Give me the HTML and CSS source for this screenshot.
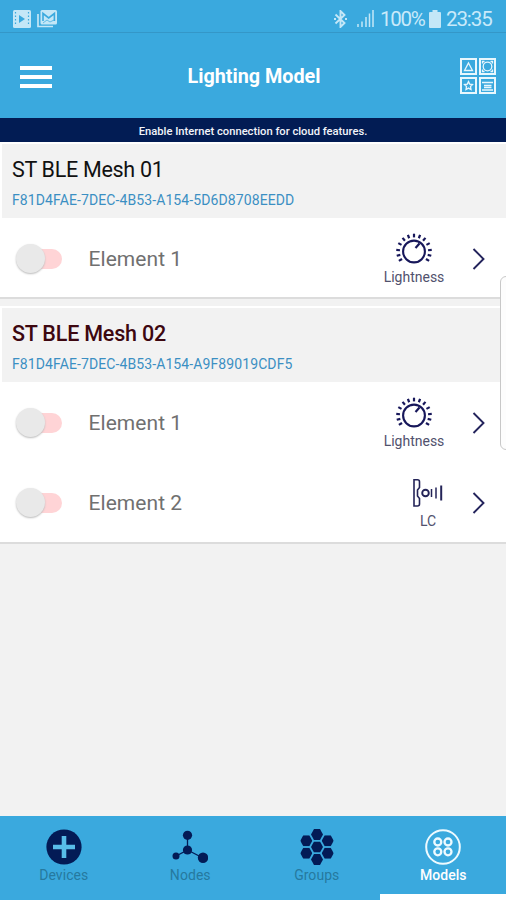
FILE: index.html
```html
<!DOCTYPE html>
<html lang="en">
<head>
<meta charset="utf-8">
<title>Lighting Model</title>
<link rel="stylesheet" href="styles.css">
</head>
<body>
<svg class="defs" width="0" height="0">
  <symbol id="dial" viewBox="0 0 36 32">
    <circle cx="18" cy="18.500" r="10.900" fill="none" stroke="#17175a" stroke-width="2.100"/>
    <path d="M19.500 15l4-4.500" stroke="#17175a" stroke-width="2.200" fill="none"/>
    <g stroke="#17175a" stroke-width="2.200">
      <path id="tick" d="M18 4.400V.7"/>
      <use href="#tick" transform="rotate(20 18 18.500)"/>
      <use href="#tick" transform="rotate(40 18 18.500)"/>
      <use href="#tick" transform="rotate(62 18 18.500)"/>
      <use href="#tick" transform="rotate(85 18 18.500)"/>
      <use href="#tick" transform="rotate(104 18 18.500)"/>
      <use href="#tick" transform="rotate(122 18 18.500)"/>
      <use href="#tick" transform="rotate(-20 18 18.500)"/>
      <use href="#tick" transform="rotate(-40 18 18.500)"/>
      <use href="#tick" transform="rotate(-62 18 18.500)"/>
      <use href="#tick" transform="rotate(-85 18 18.500)"/>
      <use href="#tick" transform="rotate(-104 18 18.500)"/>
      <use href="#tick" transform="rotate(-122 18 18.500)"/>
    </g>
  </symbol>
  <symbol id="chevron" viewBox="0 0 14 22"><path d="M1.500 1l10 10-10 10" fill="none" stroke="#24245c" stroke-width="1.900"/></symbol>
  <symbol id="hex" viewBox="0 0 12 11"><path d="M3 0h6l3 5.500L9 11H3L0 5.500z" fill="#031b56"/></symbol>
</svg>
<div class="app">
  <div class="status">
    <svg width="18" height="18" viewBox="0 0 18 18"><rect width="18" height="18" rx="1.500" fill="#c4e7f7"/><path d="M2.500 2v14M15.500 2v14" stroke="#3aa9de" stroke-width="1.200" stroke-dasharray="1.500 2"/><path d="M6 5l6 4-6 4z" fill="#3aa9de"/></svg>
    <svg class="gallery" width="20" height="18" viewBox="0 0 20 18"><path d="M1 4v12.500h15" fill="none" stroke="#c4e7f7" stroke-width="1.700"/><rect x="3.500" width="16.500" height="14.500" rx="1.500" fill="#c4e7f7"/><path d="M6 11V3.500l5.700 4.500 5.700-4.500V11" fill="none" stroke="#3aa9de" stroke-width="1.600"/><path d="M6 13l4-3 3 2 4-2" fill="none" stroke="#3aa9de" stroke-width=".7"/></svg>
    <svg class="bt" width="13" height="18" viewBox="0 0 13 18"><path d="M1.500 4.500l9 8.500-4 4V1l4 4-9 8.500" fill="none" stroke="#c4e7f7" stroke-width="1.900"/><path d="M0 8h2v2H0zM11 8h2v2h-2z" fill="#c4e7f7"/></svg>
    <svg class="signal" width="17" height="17" viewBox="0 0 17 17"><path d="M1 17v-3M5 17v-5.500M9 17V7M12.500 17V3.500M16 17V0" stroke="#c4e7f7" stroke-width="1.500"/></svg>
    <span class="percent">100%</span>
    <svg class="battery" width="12" height="18" viewBox="0 0 12 18"><path d="M3.500 0h5v2H11q1 0 1 1v14q0 1-1 1H1q-1 0-1-1V3q0-1 1-1h2.500z" fill="#c4e7f7"/></svg>
    <span class="time">23:35</span>
  </div>
  <header class="toolbar">
    <div class="menu"><i></i><i></i><i></i></div>
    <h1>Lighting Model</h1>
    <svg class="models" width="36" height="36" viewBox="0 0 36 36" fill="none" stroke="#e8f7fd"><g stroke-width="2"><rect x="1" y="1" width="15" height="15"/><rect x="20" y="1" width="15" height="15"/><rect x="1" y="20" width="15" height="15"/><rect x="20" y="20" width="15" height="15"/></g><g stroke-width="1.300"><path d="M8.500 5l4 7.500h-8z"/><circle cx="27.500" cy="8.500" r="4.300"/><path d="M22.500 5.500v-2h2M30.500 3.500h2v2M22.500 11.500v2h2M30.500 13.500h2v-2"/><path d="M8.500 23.500l1.200 2.600 2.800.4-2 2 .5 3-2.500-1.400L6 31.500l.5-3-2-2 2.800-.4z"/><path d="M22 24.500h11M24 27.500h7.500M24 29.500h7.500M22 32h11"/></g></svg>
  </header>
  <div class="banner">Enable Internet connection for cloud features.</div>
  <main>
    <section class="card">
      <div class="node"><h2>ST BLE Mesh 01</h2><p class="uuid">F81D4FAE-7DEC-4B53-A154-5D6D8708EEDD</p></div>
      <div class="row"><span class="switch"></span><span class="name">Element 1</span><div class="kind"><svg width="36" height="32"><use href="#dial"/></svg><span>Lightness</span></div><svg class="go" width="14" height="22"><use href="#chevron"/></svg></div>
    </section>
    <section class="card">
      <div class="node"><h2 class="selected">ST BLE Mesh 02</h2><p class="uuid">F81D4FAE-7DEC-4B53-A154-A9F89019CDF5</p></div>
      <div class="row"><span class="switch"></span><span class="name">Element 1</span><div class="kind"><svg width="36" height="32"><use href="#dial"/></svg><span>Lightness</span></div><svg class="go" width="14" height="22"><use href="#chevron"/></svg></div>
      <div class="row"><span class="switch"></span><span class="name">Element 2</span><div class="kind lc"><svg width="30" height="32" viewBox="0 0 30 32" fill="none" stroke="#242458"><path d="M1 2.800h3.500q2 0 2 2v5.700l-2 2.500v6l2 2.500v5.500q0 2-2 2H1z" stroke-width="1.600"/><circle cx="12.500" cy="16" r="3.300" stroke-width="1.900"/><path d="M18.500 12v8" stroke-width="1.500"/><path d="M23 10.500v11" stroke-width="1.500"/><path d="M28.200 8.500v15" stroke-width="2"/></svg><span>LC</span></div><svg class="go" width="14" height="22"><use href="#chevron"/></svg></div>
    </section>
  </main>
  <nav>
    <div class="tab"><svg width="36" height="36" viewBox="0 0 36 36"><circle cx="18" cy="18" r="17.600" fill="#031b56"/><path d="M18 7v22M7 18h22" stroke="#58bde9" stroke-width="4.600"/></svg><span>Devices</span></div>
    <div class="tab"><svg width="36" height="36" viewBox="0 0 36 36" fill="#031b56"><path d="M15.500 6v15L4 27M15.500 21L31 29" stroke="#031b56" stroke-width="1.300" fill="none"/><circle cx="15.500" cy="6.300" r="4.600"/><circle cx="15.500" cy="21" r="4.600"/><circle cx="4" cy="27" r="3.500"/><circle cx="31" cy="28.800" r="5.200"/></svg><span>Nodes</span></div>
    <div class="tab"><svg width="36" height="36" viewBox="0 0 36 36"><use href="#hex" x="12" y="0" width="12" height="11"/><use href="#hex" x="12" y="12.500" width="12" height="11"/><use href="#hex" x="12" y="25" width="12" height="11"/><use href="#hex" x="1.300" y="6.200" width="12" height="11"/><use href="#hex" x="22.700" y="6.200" width="12" height="11"/><use href="#hex" x="1.300" y="18.800" width="12" height="11"/><use href="#hex" x="22.700" y="18.800" width="12" height="11"/></svg><span>Groups</span></div>
    <div class="tab active"><svg width="36" height="36" viewBox="0 0 36 36" fill="none" stroke="#eefaff" stroke-width="2"><circle cx="18" cy="18" r="16.800"/><g stroke-width="2.300"><circle cx="12.800" cy="13" r="3.500"/><circle cx="23" cy="13" r="3.500"/><circle cx="12.800" cy="22.800" r="3.500"/><circle cx="23" cy="22.800" r="3.500"/></g></svg><span>Models</span></div>
  </nav>
  <div class="edge"></div>
</div>
</body>
</html>
```
FILE: styles.css
```css
* { box-sizing: border-box; }
body { margin: 0; font-family: Roboto, "Liberation Sans", sans-serif; }
h1, h2, p { margin: 0; }
svg { display: block; flex: none; }
.defs { position: absolute; }
.app { position: relative; width: 506px; height: 900px; display: flex; flex-direction: column; overflow: hidden; background: #f2f2f2; }
.status { height: 33px; flex: none; display: flex; align-items: center; padding: 5px 13px 0 13px; background: #3aa9de; border-bottom: 1px solid #3497c8; color: #c9eafa; font-size: 20.5px; white-space: nowrap; }
.gallery { margin-left: 6px; }
.bt { margin-left: auto; }
.signal { margin-left: 10px; }
.percent { width: 45px; margin-left: 6px; letter-spacing: -1.3px; }
.battery { margin-left: 4px; }
.time { width: 47px; margin-left: 5px; letter-spacing: -1.1px; }
.toolbar { height: 85px; flex: none; display: flex; align-items: center; justify-content: space-between; padding: 0 10px 0 20px; background: #3aa9de; }
.menu { width: 32px; display: flex; flex-direction: column; gap: 5px; margin-top: 2px; }
.menu i { height: 4px; background: #fff; }
h1 { font-size: 19.8px; line-height: 24px; font-weight: 700; color: #fff; margin: 3px 4px 0 0; }
.banner { height: 24px; flex: none; background: #021c54; color: #f2f4fa; text-align: center; font-size: 11.2px; line-height: 27px; font-weight: 500; }
main { flex: 1; }
.card { background: #fff; border-bottom: 2px solid #dcdcdc; margin-bottom: 7px; padding: 2px 0 0 2px; }
.node { height: 74px; background: #f2f2f2; padding: 13px 0 0 10px; }
h2 { font-size: 21.5px; line-height: 26px; font-weight: 400; color: #111; white-space: nowrap; letter-spacing: -.3px; }
.selected { font-weight: 500; color: #3d0710; letter-spacing: -.2px; }
.uuid { margin-top: 8px; font-size: 14px; line-height: 18px; letter-spacing: .1px; color: #3b8fc3; white-space: nowrap; }
.row { height: 80px; display: flex; align-items: center; padding: 1px 20px 0 14px; }
.card:first-child .row { height: 79px; padding-top: 2px; }
.switch { width: 46px; height: 30px; display: flex; align-items: center; position: relative; }
.switch::before { content: ""; width: 34px; height: 20px; margin-left: 12px; border-radius: 10px; background: #ffd4d6; }
.switch::after { content: ""; position: absolute; left: 0; top: 0; width: 29px; height: 29px; border-radius: 50%; background: #e9e9e9; box-shadow: 0 1px 2px #bbb; }
.name { margin: 1px 0 0 26.5px; color: #707070; font-size: 21px; line-height: 26px; letter-spacing: .05px; }
.kind { margin-left: auto; width: 64px; height: 54px; display: flex; flex-direction: column; align-items: center; color: #51516d; font-size: 14px; line-height: 18px; white-space: nowrap; }
.kind svg { margin-top: 1px; }
.kind span { margin-top: 3px; }
.go { margin-left: 26px; }
.lc { width: 30px; margin-right: 3px; }
nav { height: 84px; flex: none; display: grid; grid-template-columns: repeat(4, 1fr); background: #3aa9de; }
.tab { display: flex; flex-direction: column; align-items: center; padding: 13px 0 0 1px; color: #26799f; font-size: 14px; line-height: 18px; letter-spacing: .05px; }
.tab span { margin-top: 1px; }
.active { color: #fff; font-weight: 500; position: relative; }
.active::after { content: ""; position: absolute; left: 0; right: 0; bottom: 0; height: 6px; background: #fff; }
.edge { position: absolute; left: 500px; top: 276px; width: 12px; height: 174px; border: 1px solid #c8c8c8; border-radius: 7px; background: #fdfdfd; }
```
